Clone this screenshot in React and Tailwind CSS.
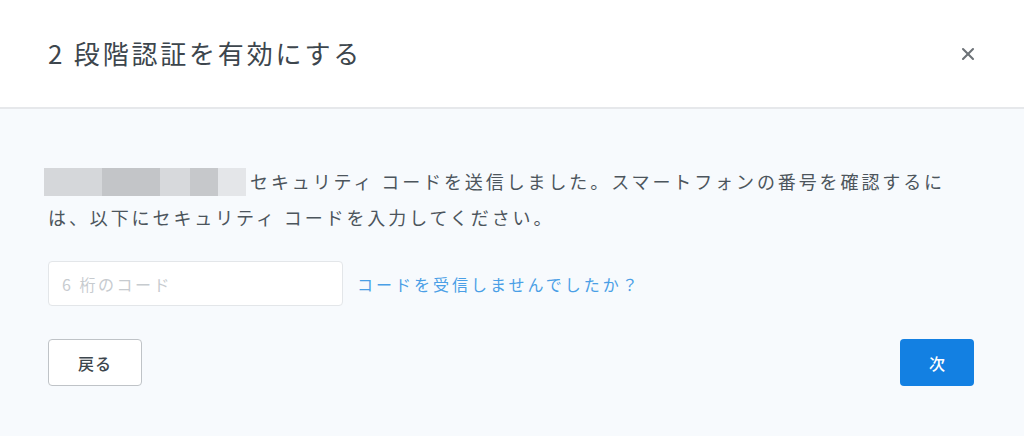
import { X } from "lucide-react";

const font = { fontFamily: '"Noto Sans CJK JP", "Noto Sans", sans-serif' };

export default function App() {
  return (
    <div className="w-[1024px] h-[436px] flex flex-col bg-[#f7fafd] overflow-hidden" style={font}>
      <div className="h-[109px] shrink-0 bg-white border-b-2 border-[#e6e8eb] flex items-center justify-between pl-[48px] pr-[46px]">
        <h1 className="text-[26px] tracking-[2.8px] text-[#3d464d] leading-none pb-[2px]">2 段階認証を有効にする</h1>
        <button className="text-[#6d7277]">
          <X size={20} strokeWidth={2.5} />
        </button>
      </div>

      <div className="flex-1 flex flex-col px-[48px] pt-[55px]">
        <p className="text-[18px] leading-[34px] tracking-[2.9px] text-[#4c555c] w-[915px]">
          <span className="inline-flex align-middle mr-[4px] ml-[-4px] h-[28px] mb-[4px]">
            <span className="w-[58px] bg-[#d5d7da]" />
            <span className="w-[58px] bg-[#c3c5c8]" />
            <span className="w-[30px] bg-[#d7d9dc]" />
            <span className="w-[28px] bg-[#c6c8cb]" />
            <span className="w-[28px] bg-[#e4e6e9]" />
          </span>
          セキュリティ コードを送信しました。スマートフォンの番号を確認するには、以下にセキュリティ コードを入力してください。
        </p>

        <div className="flex items-center mt-[27px] gap-[14px]">
          <input
            className="w-[295px] h-[45px] bg-white border border-[#e3e6e9] rounded-[4px] px-[13px] text-[16px] tracking-[2.5px] placeholder:text-[#c7cbcf] outline-none"
            placeholder="6 桁のコード"
          />
          <a className="text-[16px] tracking-[3px] text-[#4a9fe6] cursor-pointer">コードを受信しませんでしたか？</a>
        </div>

        <div className="flex items-center justify-between mt-[33px] pr-[2px]">
          <button className="w-[94px] h-[47px] bg-white border border-[#bfc3c7] rounded-[4px] text-[16px] font-medium text-[#3d464d] tracking-[1px]">
            戻る
          </button>
          <button className="w-[74px] h-[47px] bg-[#1380e2] rounded-[4px] text-[16px] font-medium text-white">
            次
          </button>
        </div>
      </div>
    </div>
  );
}
